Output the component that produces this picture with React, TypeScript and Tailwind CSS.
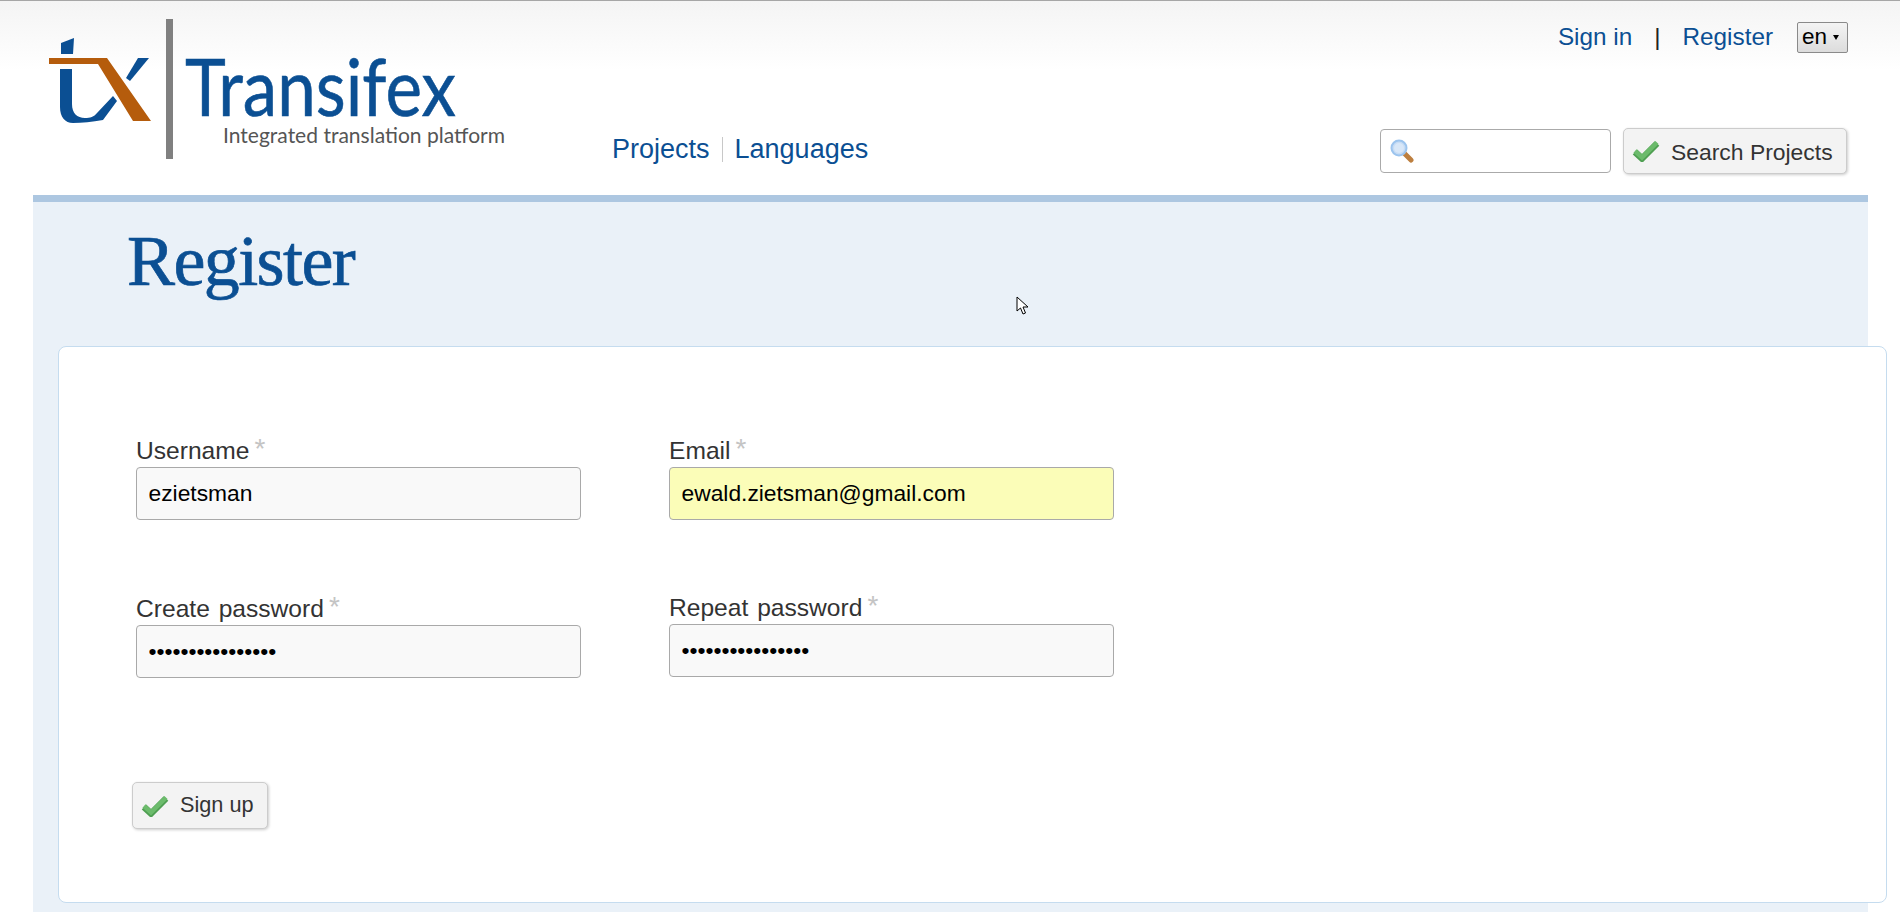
import React from "react";

const BLUE = "#0b4f93";

function Logo() {
  return (
    <svg width="520" height="170" viewBox="0 0 520 170" className="block shrink-0">
      <rect x="166" y="18" width="7" height="140" fill="#808080" />
      <path d="M61 42 L74 37 L73 53 L61 53 Z" fill={BLUE} />
      <path d="M60 68 L72 68 L72 103 C72 112 77 117 85 117 C90 117 94 116 97 112 L113 95 L117 100 L103 119 C92 121 82 122 73 122 C65 122 60 116 60 106 Z" fill={BLUE} />
      <path d="M138 57 L149 57 L130 80 L126 77 Z" fill={BLUE} />
      <path d="M49 57 L107 57 L151 120 L133 120 L98 63 L49 63 Z" fill="#b55c0c" />
      <text x="185" y="115" fontFamily="Lato, sans-serif" fontSize="80" fill={BLUE} stroke={BLUE} strokeWidth="0.6" textLength="271" lengthAdjust="spacingAndGlyphs">Transifex</text>
      <text x="223" y="142" fontFamily="Lato, sans-serif" fontSize="21" fill="#555555" textLength="282" lengthAdjust="spacingAndGlyphs">Integrated translation platform</text>
    </svg>
  );
}

function Check({ w = 28, h = 22 }: { w?: number; h?: number }) {
  return (
    <svg width={w} height={h} viewBox="0 0 28 22" className="shrink-0">
      <path d="M3 12 L10 18.5 L25 3.5" fill="none" stroke="#4f9f52" strokeWidth="6.5" />
      <path d="M3 11 L10 17.5 L25 2.5" fill="none" stroke="#6cbb6c" strokeWidth="4.5" />
    </svg>
  );
}

function Magnifier() {
  return (
    <svg width="24" height="24" viewBox="0 0 24 24">
      <path d="M15 15 L21 21" stroke="#bd7f3f" strokeWidth="5" strokeLinecap="round" />
      <circle cx="9" cy="9" r="7.5" fill="#c6dcf5" stroke="#9cc4ee" strokeWidth="2" />
      <circle cx="9" cy="9" r="5" fill="#d8e7f8" />
    </svg>
  );
}

function Field({ label, value, type, bg, className }: { label: string; value: string; type: string; bg: string; className?: string }) {
  return (
    <div className={`w-[445px] ${className ?? ""}`}>
      <label className="flex h-[34px] items-end text-[24.6px] leading-[32px] text-[#333333] [word-spacing:2px]">
        {label}
        <span className="ml-[5px] mt-[3px] self-start text-[28px] leading-[26px] text-[#c4c4c4]">*</span>
      </label>
      <input
        readOnly
        type={type}
        value={value}
        className={`block h-[53px] w-full rounded-[4px] border border-[#a9a9a9] pl-[11.5px] pr-[11px] text-[22.8px] text-black outline-none ${bg}`}
        style={{ fontFamily: "'Liberation Sans', sans-serif" }}
      />
    </div>
  );
}

function Btn({ children, className }: { children: React.ReactNode; className?: string }) {
  return (
    <button className={`flex items-center rounded-[5px] border border-[#cccccc] bg-[#f3f3f3] text-[#333333] shadow-[1px_1px_3px_rgba(0,0,0,0.2)] ${className ?? ""}`}>
      {children}
    </button>
  );
}

export default function App() {
  return (
    <div className="relative h-[912px] w-full overflow-hidden bg-white font-['Liberation_Sans',sans-serif]">
      <header className="flex h-[195px] border-t border-[#a6a6a6] bg-[linear-gradient(#f4f4f4,#ffffff_70px)]">
        <Logo />
        <nav className="ml-[92px] mt-[130px] flex h-[36px] items-center text-[27px] text-[#0b4f93]">
          <a>Projects</a>
          <span className="ml-[12px] mr-[12px] h-[25px] w-[1px] bg-[#c8c8c8]" />
          <a>Languages</a>
        </nav>
        <div className="ml-auto flex flex-col items-end pr-[52px]">
          <div className="mt-[20px] flex h-[32px] items-center text-[24.3px] text-[#0b4f93]">
            <a>Sign in</a>
            <span className="mx-[22px] text-[#222222]">|</span>
            <a>Register</a>
            <div className="ml-[24px] flex h-[31px] w-[51px] items-center gap-[6px] rounded-[2px] border border-[#8a8a8a] bg-[linear-gradient(#f4f4f4,#dcdcdc)] pl-[4px] text-[22.5px] text-black">
              en
              <span className="h-0 w-0 border-x-[3px] border-t-[5px] border-x-transparent border-t-black" />
            </div>
          </div>
          <div className="mr-[1px] mt-[75px] flex items-center gap-[12px]">
            <div className="flex h-[44px] w-[231px] items-center rounded-[4px] border border-[#aaaaaa] bg-white pl-[9px]">
              <Magnifier />
            </div>
            <Btn className="h-[46px] w-[224px] gap-[11px] pl-[8px] text-[22.9px]">
              <Check />
              <span className="pt-[2px]">Search Projects</span>
            </Btn>
          </div>
        </div>
      </header>

      <main className="ml-[33px] h-[717px] w-[1835px] border-t-[7px] border-[#adc7e1] bg-[#eaf1f8]">
        <h1 className="ml-[94px] pt-[19px] font-['Liberation_Serif',serif] text-[72px] leading-[80px] tracking-[-1.6px] text-[#0b4f93] [-webkit-text-stroke:0.7px_#0b4f93]">Register</h1>
        <section className="ml-[25px] mt-[45px] h-[557px] w-[1829px] rounded-[8px] border border-[#c5dcef] bg-white pl-[77px]">
          <div className="grid grid-cols-[445px_445px] gap-x-[88px] pt-[86px]">
            <Field label="Username" value="ezietsman" type="text" bg="bg-[#f9f9f9]" />
            <Field label="Email" value="ewald.zietsman@gmail.com" type="text" bg="bg-[#fbfdb8]" />
            <Field label="Create password" value="aaaaaaaaaaaaaaaa" type="password" bg="bg-[#f9f9f9]" className="mt-[71px]" />
            <Field label="Repeat password" value="aaaaaaaaaaaaaaaa" type="password" bg="bg-[#f9f9f9]" className="mt-[70px]" />
          </div>
          <Btn className="-ml-[4px] mt-[104px] h-[47px] w-[136px] gap-[11px] pl-[8px] text-[21.7px]">
            <Check />
            Sign up
          </Btn>
        </section>
      </main>

      <svg width="14" height="20" viewBox="0 0 14 20" className="absolute left-[1016px] top-[296px]">
        <path d="M1 1 L1 15 L4.5 12 L7 18 L9.5 17 L7 11 L12 11 Z" fill="#ffffff" stroke="#000000" strokeWidth="1" />
      </svg>
    </div>
  );
}
